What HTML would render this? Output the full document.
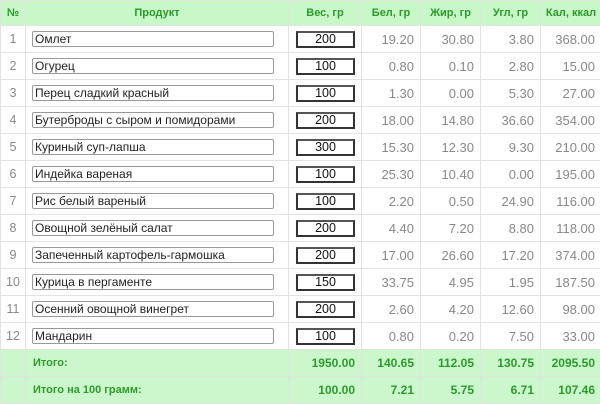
<!DOCTYPE html>
<html><head><meta charset="utf-8"><style>
body{margin:0;width:600px;height:403px;overflow:hidden;background:#fff;font-family:"Liberation Sans","DejaVu Sans",sans-serif;}
table{border-collapse:collapse;table-layout:fixed;width:601px;}
td,th{border:1px solid #e2e2e2;padding:0;height:26px;font-size:12px;}
th{background:#c8f7c8;color:#2c9a2c;font-size:11px;font-weight:bold;height:24px;}
td.n{text-align:center;color:#888;font-size:12.5px;}
td.v{text-align:right;padding-right:6px;color:#888;font-size:13px;}
.p{display:block;margin-left:6px;width:238px;height:14px;border:1px solid #999;border-radius:2px;line-height:14px;padding-left:2px;color:#222;font-size:12px;}
.w{display:block;margin-left:7px;width:55px;height:13px;border:2px solid #333;border-top-color:#555;line-height:13px;text-align:center;color:#111;font-size:12.5px;}
tr.t td{background:#ccf7cc;color:#2c9a2c;font-weight:bold;font-size:11px;height:26px;}
tr.t td.v{color:#2c9a2c;font-size:12px;}
</style></head><body>
<table>
<colgroup><col style="width:25px"><col style="width:263px"><col style="width:73px"><col style="width:59px"><col style="width:60px"><col style="width:60px"><col style="width:61px"></colgroup>
<tr><th>№</th><th>Продукт</th><th>Вес, гр</th><th>Бел, гр</th><th>Жир, гр</th><th>Угл, гр</th><th>Кал, ккал</th></tr>
<tr><td class="n">1</td><td><span class="p">Омлет</span></td><td><span class="w">200</span></td><td class="v">19.20</td><td class="v">30.80</td><td class="v">3.80</td><td class="v">368.00</td></tr>
<tr><td class="n">2</td><td><span class="p">Огурец</span></td><td><span class="w">100</span></td><td class="v">0.80</td><td class="v">0.10</td><td class="v">2.80</td><td class="v">15.00</td></tr>
<tr><td class="n">3</td><td><span class="p">Перец сладкий красный</span></td><td><span class="w">100</span></td><td class="v">1.30</td><td class="v">0.00</td><td class="v">5.30</td><td class="v">27.00</td></tr>
<tr><td class="n">4</td><td><span class="p">Бутерброды с сыром и помидорами</span></td><td><span class="w">200</span></td><td class="v">18.00</td><td class="v">14.80</td><td class="v">36.60</td><td class="v">354.00</td></tr>
<tr><td class="n">5</td><td><span class="p">Куриный суп-лапша</span></td><td><span class="w">300</span></td><td class="v">15.30</td><td class="v">12.30</td><td class="v">9.30</td><td class="v">210.00</td></tr>
<tr><td class="n">6</td><td><span class="p">Индейка вареная</span></td><td><span class="w">100</span></td><td class="v">25.30</td><td class="v">10.40</td><td class="v">0.00</td><td class="v">195.00</td></tr>
<tr><td class="n">7</td><td><span class="p">Рис белый вареный</span></td><td><span class="w">100</span></td><td class="v">2.20</td><td class="v">0.50</td><td class="v">24.90</td><td class="v">116.00</td></tr>
<tr><td class="n">8</td><td><span class="p">Овощной зелёный салат</span></td><td><span class="w">200</span></td><td class="v">4.40</td><td class="v">7.20</td><td class="v">8.80</td><td class="v">118.00</td></tr>
<tr><td class="n">9</td><td><span class="p">Запеченный картофель-гармошка</span></td><td><span class="w">200</span></td><td class="v">17.00</td><td class="v">26.60</td><td class="v">17.20</td><td class="v">374.00</td></tr>
<tr><td class="n">10</td><td><span class="p">Курица в пергаменте</span></td><td><span class="w">150</span></td><td class="v">33.75</td><td class="v">4.95</td><td class="v">1.95</td><td class="v">187.50</td></tr>
<tr><td class="n">11</td><td><span class="p">Осенний овощной винегрет</span></td><td><span class="w">200</span></td><td class="v">2.60</td><td class="v">4.20</td><td class="v">12.60</td><td class="v">98.00</td></tr>
<tr><td class="n">12</td><td><span class="p">Мандарин</span></td><td><span class="w">100</span></td><td class="v">0.80</td><td class="v">0.20</td><td class="v">7.50</td><td class="v">33.00</td></tr>
<tr class="t"><td></td><td style="padding-left:7px">Итого:</td><td class="v">1950.00</td><td class="v">140.65</td><td class="v">112.05</td><td class="v">130.75</td><td class="v">2095.50</td></tr>
<tr class="t"><td></td><td style="padding-left:7px">Итого на 100 грамм:</td><td class="v">100.00</td><td class="v">7.21</td><td class="v">5.75</td><td class="v">6.71</td><td class="v">107.46</td></tr>
</table>
</body></html>
